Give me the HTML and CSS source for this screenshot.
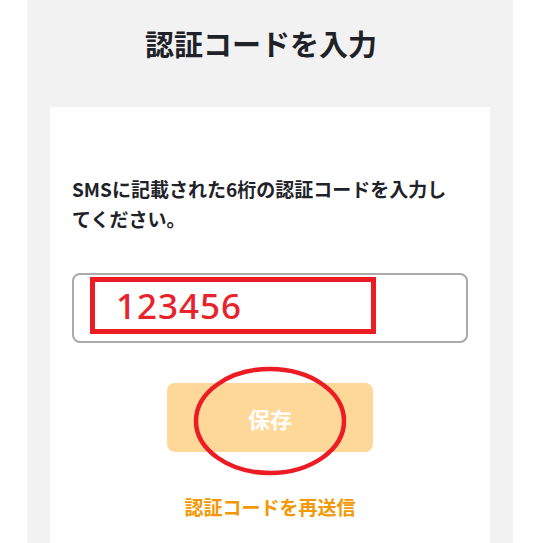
FILE: index.html
```html
<!DOCTYPE html>
<html lang="ja">
<head>
    <meta charset="UTF-8">
    <meta name="viewport" content="width=device-width, initial-scale=1.0">
    <title>認証コードを入力</title>
    <link rel="stylesheet" href="styles.css">
</head>
<body>
    <div class="page">
        <h1 class="title">認証コードを入力</h1>

        <div class="card">
            <p class="lead">SMSに記載された6桁の認証コードを入力してください。</p>

            <div class="code-field">
                <span class="code-value">123456</span>
                <span class="mark-box"></span>
            </div>

            <div class="actions">
                <button class="save-btn">保存</button>
                <svg class="mark-ring" width="160" height="114" viewBox="0 0 160 114">
                    <ellipse cx="80" cy="57" rx="74" ry="52" fill="none" stroke="#ed1c24" stroke-width="4.5"/>
                </svg>
            </div>

            <a class="resend" href="#">認証コードを再送信</a>
        </div>
    </div>
</body>
</html>
```

FILE: styles.css
```css
body {
    margin: 0;
    background: #fff;
    font-family: "Noto Sans CJK JP", "Noto Sans", sans-serif;
    color: #1f2329;
}
.page {
    margin: 0 27px;
    background: #f2f2f2;
    min-height: 543px;
    padding: 0 23px;
}
.title {
    margin: 0;
    height: 107px;
    padding: 23px 18px 0 0;
    box-sizing: border-box;
    font-size: 29px;
    line-height: 40px;
    font-weight: bold;
    text-align: center;
}
.card {
    background: #fff;
    padding: 67px 22px 30px;
    min-height: 436px;
    box-sizing: border-box;
}
.lead {
    margin: 0;
    padding-right: 12px;
    font-size: 19px;
    line-height: 30px;
    font-weight: bold;
}
.code-field {
    position: relative;
    margin-top: 39px;
    height: 70px;
    border: 2px solid #aaa;
    border-radius: 8px;
    box-sizing: border-box;
    display: flex;
    align-items: center;
    padding: 0 0 6px 42px;
}
.code-value {
    font-family: "Noto Sans", sans-serif;
    font-size: 35px;
    font-weight: 500;
    letter-spacing: 1px;
    color: #e8232b;
    line-height: 1;
}
.mark-box {
    position: absolute;
    left: 16px;
    top: 2px;
    width: 286px;
    height: 57px;
    border: 5px solid #ed1c24;
    box-sizing: border-box;
}
.actions {
    position: relative;
    margin-top: 40px;
    display: flex;
    justify-content: center;
}
.save-btn {
    width: 206px;
    height: 69px;
    border: none;
    border-radius: 8px;
    background: #fed899;
    color: #fff;
    font-family: inherit;
    font-size: 22px;
    font-weight: bold;
}
.mark-ring {
    position: absolute;
    left: 50%;
    top: -19px;
    margin-left: -80px;
}
.resend {
    display: block;
    margin-top: 41px;
    text-align: center;
    color: #f39800;
    font-size: 19px;
    line-height: 28px;
    font-weight: bold;
    text-decoration: none;
}
```
